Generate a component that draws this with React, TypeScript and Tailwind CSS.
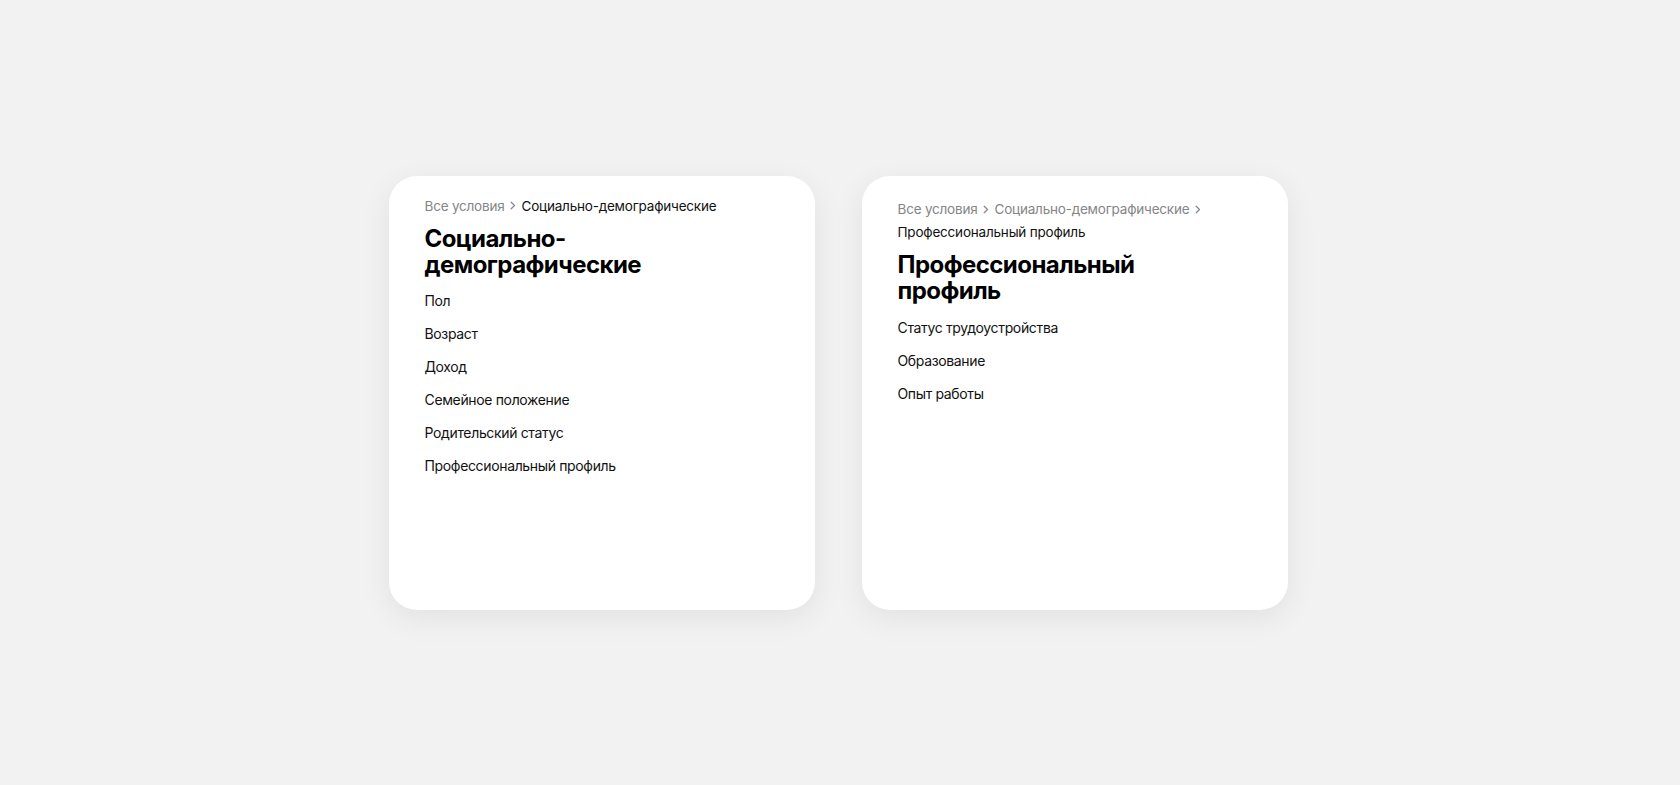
import React from "react";

const Chevron = () => (
  <svg width="6" height="9" viewBox="0 0 6 9" fill="none" className="mx-[5.5px] shrink-0 inline-block">
    <path d="M1.2 1.2L4.5 4.5L1.2 7.8" stroke="#8a8a8a" strokeWidth="1.3" strokeLinecap="round" strokeLinejoin="round" />
  </svg>
);

const font = { fontFamily: "Inter, 'Noto Sans', sans-serif" };

function Card1() {
  const items = ["Пол", "Возраст", "Доход", "Семейное положение", "Родительский статус", "Профессиональный профиль"];
  return (
    <div className="w-[426px] h-[434px] bg-white rounded-[28px] shadow-[0_8px_32px_rgba(0,0,0,0.07)] px-[36px] pt-[22px]">
      <div className="flex items-center text-[13.5px] leading-4 tracking-[-0.2px]">
        <span className="text-[#858585]">Все условия</span>
        <Chevron />
        <span className="text-[#111]">Социально-демографические</span>
      </div>
      <h2 className="mt-[12px] text-[24px] leading-[26px] font-bold text-black tracking-[-0.55px]">
        Социально-
        <br />
        демографические
      </h2>
      <div className="mt-[6px] flex flex-col">
        {items.map((t) => (
          <div key={t} className="h-[33px] leading-[33px] text-[14px] text-[#111] tracking-[-0.35px]">
            {t}
          </div>
        ))}
      </div>
    </div>
  );
}

function Card2() {
  const items = ["Статус трудоустройства", "Образование", "Опыт работы"];
  return (
    <div className="w-[426px] h-[434px] bg-white rounded-[28px] shadow-[0_8px_32px_rgba(0,0,0,0.07)] px-[36px] pt-[22px]">
      <div className="text-[13.5px] leading-[23px] tracking-[-0.2px]">
        <div className="flex items-center">
          <span className="text-[#858585]">Все условия</span>
          <Chevron />
          <span className="text-[#858585]">Социально-демографические</span>
          <Chevron />
        </div>
        <div className="text-[#111]">Профессиональный профиль</div>
      </div>
      <h2 className="mt-2 text-[24px] leading-[26px] font-bold text-black tracking-[-0.55px]">
        Профессиональный
        <br />
        профиль
      </h2>
      <div className="mt-[7px] flex flex-col">
        {items.map((t) => (
          <div key={t} className="h-[33px] leading-[33px] text-[14px] text-[#111] tracking-[-0.35px]">
            {t}
          </div>
        ))}
      </div>
    </div>
  );
}

export default function App() {
  return (
    <div className="w-full h-[785px] bg-[#f2f2f2] flex items-center justify-center gap-[47px] pr-[4px]" style={font}>
      <Card1 />
      <Card2 />
    </div>
  );
}
